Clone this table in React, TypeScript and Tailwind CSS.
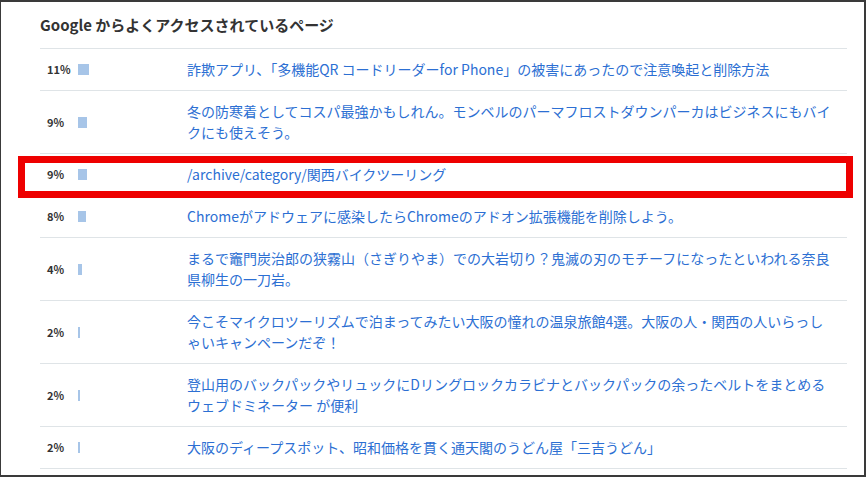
import React from "react";

const rows = [
  { pct: 11, title: "詐欺アプリ、「多機能QR コードリーダーfor Phone」の被害にあったので注意喚起と削除方法" },
  { pct: 9, title: "冬の防寒着としてコスパ最強かもしれん。モンベルのパーマフロストダウンパーカはビジネスにもバイクにも使えそう。" },
  { pct: 9, title: "/archive/category/関西バイクツーリング" },
  { pct: 8, title: "Chromeがアドウェアに感染したらChromeのアドオン拡張機能を削除しよう。" },
  { pct: 4, title: "まるで竈門炭治郎の狭霧山（さぎりやま）での大岩切り？鬼滅の刃のモチーフになったといわれる奈良県柳生の一刀岩。" },
  { pct: 2, title: "今こそマイクロツーリズムで泊まってみたい大阪の憧れの温泉旅館4選。大阪の人・関西の人いらっしゃいキャンペーンだぞ！" },
  { pct: 2, title: "登山用のバックパックやリュックにDリングロックカラビナとバックパックの余ったベルトをまとめるウェブドミネーター が便利" },
  { pct: 2, title: "大阪のディープスポット、昭和価格を貫く通天閣のうどん屋「三吉うどん」" },
];

export default function App() {
  return (
    <div
      className="relative w-[866px] h-[477px] bg-white border-l border-t-2 border-r-2 border-b-2 border-[#3a3a3a] overflow-hidden"
      style={{ fontFamily: '"Noto Sans CJK JP", "Noto Sans", sans-serif' }}
    >
      <div className="ml-[39px] w-[807px]">
        {/* Header */}
        <div className="h-[46px] flex items-center">
          <h2 className="text-[15px] font-bold text-[#333]">Google からよくアクセスされているページ</h2>
        </div>

        {/* Rows */}
        <div className="border-b border-[#dfe4e7]">
          {rows.map((r, i) => (
            <div key={i} className="flex items-center border-t border-[#dfe4e7] py-[10px]">
              <div className="w-[38px] pl-[7px] text-[11px] font-bold text-[#333] leading-[21px]">{r.pct}%</div>
              <div className="w-[109px] flex items-center">
                <div className="h-[11px] bg-[#a7c5e8]" style={{ width: `${r.pct}px` }} />
              </div>
              <a className="w-[648px] text-[14px] leading-[21px] text-[#2c6fd3]">{r.title}</a>
            </div>
          ))}
        </div>
      </div>

      {/* Highlight annotation */}
      <div className="absolute left-[17px] top-[154px] w-[835px] h-[42px] border-[7px] border-[#ee0000]" />
    </div>
  );
}
